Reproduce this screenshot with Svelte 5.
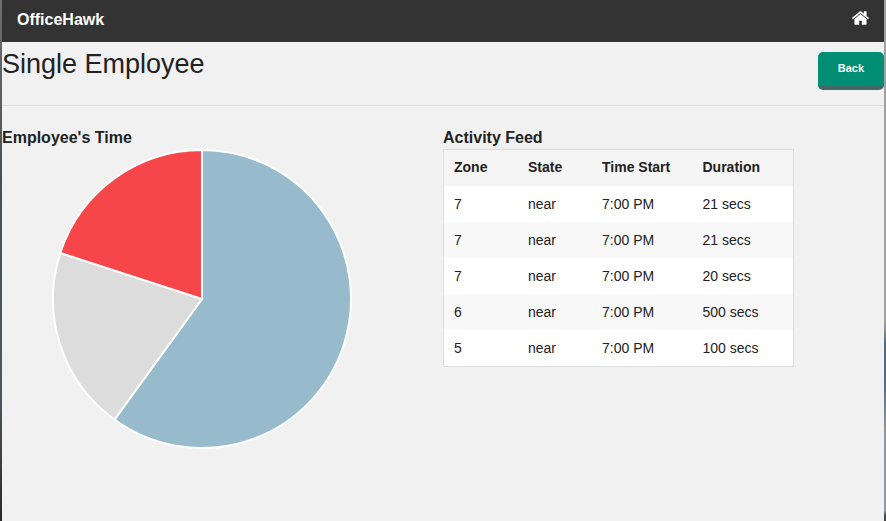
<script>
  const activity = [
    { zone: 7, state: 'near', start: '7:00 PM', duration: '21 secs' },
    { zone: 7, state: 'near', start: '7:00 PM', duration: '21 secs' },
    { zone: 7, state: 'near', start: '7:00 PM', duration: '20 secs' },
    { zone: 6, state: 'near', start: '7:00 PM', duration: '500 secs' },
    { zone: 5, state: 'near', start: '7:00 PM', duration: '100 secs' }
  ];

  const shares = [
    { value: 60, color: '#97bacd' },
    { value: 20, color: '#dcdcdc' },
    { value: 20, color: '#f7464a' }
  ];

  const radius = 149;
  const center = 150;

  function point(percent) {
    const angle = (percent / 100) * 2 * Math.PI;
    return `${center + radius * Math.sin(angle)} ${center - radius * Math.cos(angle)}`;
  }

  let total = 0;
  const slices = shares.map(({ value, color }) => {
    const from = total;
    total += value;
    const large = value > 50 ? 1 : 0;
    return {
      color,
      d: `M${center} ${center}L${point(from)}A${radius} ${radius} 0 ${large} 1 ${point(total)}Z`
    };
  });
</script>

<div class="backdrop">
  <div class="page">
    <nav>
      <a class="brand" href="#home">OfficeHawk</a>
      <a class="home" href="#home" aria-label="Home">
        <svg viewBox="24 250 1616 1290" width="17" height="14" fill="#fff">
          <path d="M1408 992v480q0 26-19 45t-45 19h-384v-384h-256v384h-384q-26 0-45-19t-19-45v-480q0-1 .5-3t.5-3l575-474 575 474q1 2 1 6zm223-69l-62 74q-8 9-21 11h-3q-13 0-21-7l-692-577-692 577q-12 8-24 7-13-2-21-11l-62-74q-8-10-7-23.500t11-21.500l719-599q32-26 76-26t76 26l244 204v-195q0-14 9-23t23-9h192q14 0 23 9t9 23v408l219 182q10 8 11 21.500t-7 23.500z" />
        </svg>
      </a>
    </nav>

    <header>
      <h1>Single Employee</h1>
      <button type="button">Back</button>
    </header>

    <main>
      <section>
        <h2>Employee's Time</h2>
        <svg class="pie" viewBox="0 0 300 300" role="img" aria-label="Employee's Time">
          {#each slices as slice}
            <path d={slice.d} fill={slice.color} stroke="#fff" stroke-width="2" />
          {/each}
        </svg>
      </section>

      <section>
        <h2>Activity Feed</h2>
        <table>
          <thead>
            <tr>
              <th class="narrow">Zone</th>
              <th class="narrow">State</th>
              <th>Time Start</th>
              <th>Duration</th>
            </tr>
          </thead>
          <tbody>
            {#each activity as row}
              <tr>
                <td>{row.zone}</td>
                <td>{row.state}</td>
                <td>{row.start}</td>
                <td>{row.duration}</td>
              </tr>
            {/each}
          </tbody>
        </table>
      </section>
    </main>
  </div>
</div>

<style>
  .backdrop {
    box-sizing: border-box;
    min-height: 100vh;
    display: flex;
    padding: 0 2px;
    background:
      linear-gradient(#6b7076, #43505a 35%, #4b5962 75%, #252b30) left / 2px 100% no-repeat,
      linear-gradient(#a0a0a0 62%, #4f6b80 66%, #566f80 74%, #8a959d 82%, #929ba2 98%, #444 99%) right / 2px 100% no-repeat;
    font-family: "Liberation Sans", Arial, sans-serif;
    color: #222;
  }

  .page {
    flex: 1;
    background: #f1f1f1;
  }

  nav {
    display: flex;
    align-items: center;
    justify-content: space-between;
    height: 42px;
    padding: 0 15px;
    background: #333;
  }

  .brand {
    color: #fff;
    font-size: 16px;
    line-height: 40px;
    font-weight: bold;
    text-decoration: none;
    padding-bottom: 2px;
  }

  .home {
    display: flex;
    padding-bottom: 6px;
  }

  header {
    display: flex;
    align-items: flex-start;
    justify-content: space-between;
    height: 63px;
    border-bottom: 1px solid #ddd;
  }

  h1 {
    margin: 0;
    padding-top: 4px;
    font-size: 27px;
    line-height: 36px;
    font-weight: normal;
  }

  button {
    margin-top: 10px;
    height: 38px;
    padding: 0 20px 2px;
    border: 0;
    border-bottom: 4px solid #436668;
    border-radius: 5px;
    background: #008f75;
    color: #fff;
    font-family: inherit;
    font-size: 11px;
    font-weight: bold;
  }

  main {
    display: grid;
    grid-template-columns: 1fr 1fr;
    padding-top: 20px;
  }

  h2 {
    margin: 0;
    font-size: 16px;
    line-height: 23px;
  }

  .pie {
    display: block;
    width: 300px;
    margin-left: 50px;
  }

  table {
    width: 351px;
    max-width: 100%;
    table-layout: fixed;
    border: 1px solid #ddd;
    border-spacing: 0;
    background: #fff;
    font-size: 14px;
    line-height: 18px;
  }

  th,
  td {
    padding: 9px 10px;
    text-align: left;
    white-space: nowrap;
  }

  th {
    padding: 8px 10px 10px;
    background: #f5f5f5;
  }

  .narrow {
    width: 54px;
  }

  tbody tr:nth-child(even) {
    background: #f9f9f9;
  }
</style>
